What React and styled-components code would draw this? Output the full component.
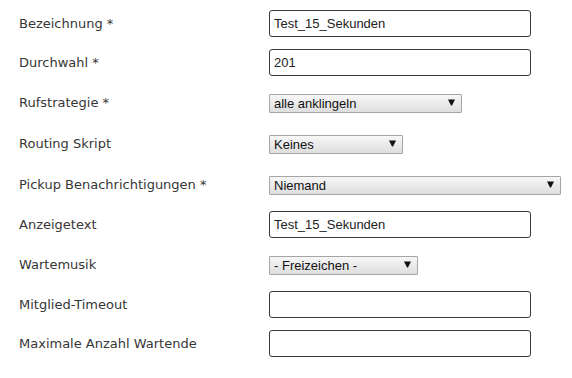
import React from "react";
import styled, { createGlobalStyle } from "styled-components";

const GlobalStyle = createGlobalStyle`
  html, body {
    margin: 0;
    padding: 0;
    background: #ffffff;
  }
  body {
    font-family: "DejaVu Sans", Verdana, sans-serif;
  }
`;

const Form = styled.div`
  width: 572px;
  padding-top: 3.5px;
  display: flex;
  flex-direction: column;
`;

const Row = styled.div`
  display: flex;
  align-items: center;
  height: ${(p) => (p.$select ? 41 : 39)}px;
`;

const Label = styled.label`
  width: 250px;
  padding-left: 19px;
  padding-top: ${(p) => (p.$select ? 1 : 0)}px;
  font-size: 13px;
  color: #363636;
  white-space: nowrap;
`;

const Control = styled.div`
  display: flex;
  align-items: center;
  padding-top: ${(p) => (p.$select ? 1 : 0)}px;
`;

const TextInput = styled.input`
  box-sizing: border-box;
  width: 262px;
  height: 27px;
  padding: 0 4px;
  border: 1px solid #3a3a3a;
  border-radius: 3px;
  font-family: "Liberation Sans", Arial, sans-serif;
  font-size: 13px;
  color: #222;
  background: #fff;
  outline: none;
`;

const SelectWrap = styled.div`
  position: relative;
  width: ${(p) => p.$width}px;
  height: 19px;
`;

const Select = styled.select`
  appearance: none;
  box-sizing: border-box;
  width: 100%;
  height: 100%;
  margin: 0;
  padding: 0 18px 0 4px;
  border: 1px solid #a6a6a6;
  border-radius: 1px;
  background: linear-gradient(#f7f7f7, #dedede);
  font-family: "Liberation Sans", Arial, sans-serif;
  font-size: 13px;
  color: #111;
  outline: none;
`;

const Arrow = styled.svg`
  position: absolute;
  right: 7px;
  top: 6px;
  width: 7px;
  height: 7px;
  pointer-events: none;
`;

const fields = [
  { label: "Bezeichnung *", type: "input", value: "Test_15_Sekunden" },
  { label: "Durchwahl *", type: "input", value: "201" },
  { label: "Rufstrategie *", type: "select", value: "alle anklingeln", width: 193 },
  { label: "Routing Skript", type: "select", value: "Keines", width: 134 },
  { label: "Pickup Benachrichtigungen *", type: "select", value: "Niemand", width: 292 },
  { label: "Anzeigetext", type: "input", value: "Test_15_Sekunden" },
  { label: "Wartemusik", type: "select", value: "- Freizeichen -", width: 149 },
  { label: "Mitglied-Timeout", type: "input", value: "" },
  { label: "Maximale Anzahl Wartende", type: "input", value: "" },
];

const DropDown = ({ value, width }) => (
  <SelectWrap $width={width}>
    <Select defaultValue={value}>
      <option>{value}</option>
    </Select>
    <Arrow viewBox="0 0 7 7">
      <path d="M0 0.5 H7 L4 6.5 H3 Z" fill="#111" />
    </Arrow>
  </SelectWrap>
);

const App = () => {
  return (
    <>
      <GlobalStyle />
      <Form>
        {fields.map((f) => {
          const isSelect = f.type === "select";
          return (
            <Row key={f.label} $select={isSelect}>
              <Label $select={isSelect}>{f.label}</Label>
              <Control $select={isSelect}>
                {isSelect ? (
                  <DropDown value={f.value} width={f.width} />
                ) : (
                  <TextInput type="text" defaultValue={f.value} />
                )}
              </Control>
            </Row>
          );
        })}
      </Form>
    </>
  );
};

export default App;
